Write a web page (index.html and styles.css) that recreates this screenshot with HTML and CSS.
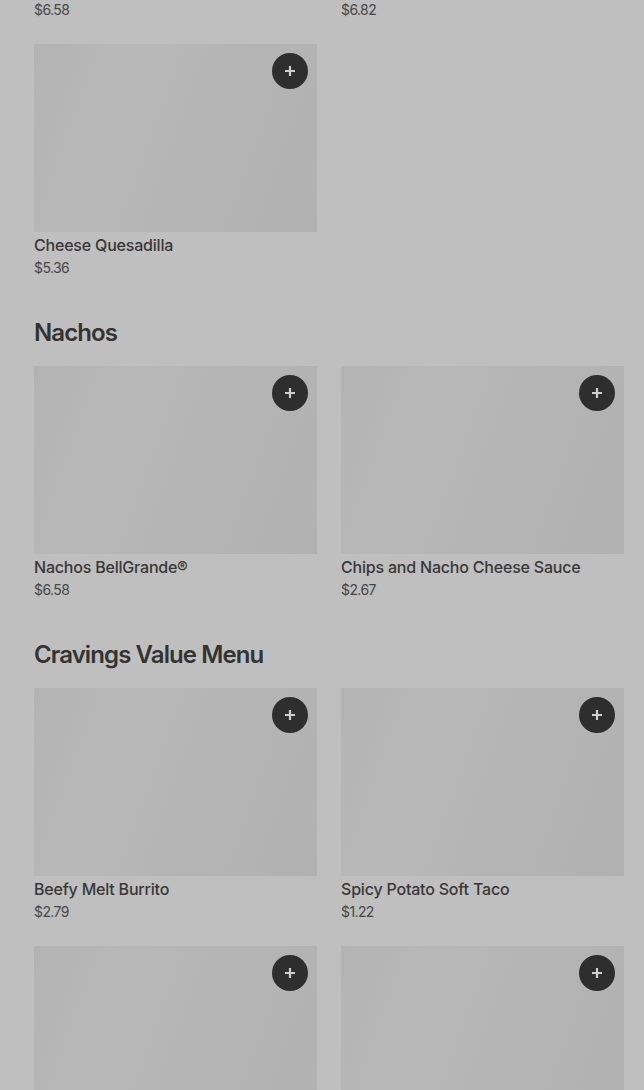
FILE: index.html
```html
<!DOCTYPE html>
<html lang="en">
<head>
    <meta charset="UTF-8">
    <title>Menu</title>
    <link rel="stylesheet" href="styles.css">
</head>
<body>
    <div class="menu">
        <div class="grid tail">
            <div class="price">$6.58</div>
            <div class="price">$6.82</div>
        </div>
        <div class="grid">
            <div class="item">
                <div class="thumb"><button class="add"><svg viewBox="0 0 16 16"><path d="M8 3v10M3 8h10"/></svg></button></div>
                <div class="name">Cheese Quesadilla</div>
                <div class="price">$5.36</div>
            </div>
        </div>

        <section class="section">
            <h2>Nachos</h2>
            <div class="grid">
                <div class="item">
                    <div class="thumb"><button class="add"><svg viewBox="0 0 16 16"><path d="M8 3v10M3 8h10"/></svg></button></div>
                    <div class="name">Nachos BellGrande®</div>
                    <div class="price">$6.58</div>
                </div>
                <div class="item">
                    <div class="thumb"><button class="add"><svg viewBox="0 0 16 16"><path d="M8 3v10M3 8h10"/></svg></button></div>
                    <div class="name">Chips and Nacho Cheese Sauce</div>
                    <div class="price">$2.67</div>
                </div>
            </div>
        </section>

        <section class="section">
            <h2>Cravings Value Menu</h2>
            <div class="grid">
                <div class="item">
                    <div class="thumb"><button class="add"><svg viewBox="0 0 16 16"><path d="M8 3v10M3 8h10"/></svg></button></div>
                    <div class="name">Beefy Melt Burrito</div>
                    <div class="price">$2.79</div>
                </div>
                <div class="item">
                    <div class="thumb"><button class="add"><svg viewBox="0 0 16 16"><path d="M8 3v10M3 8h10"/></svg></button></div>
                    <div class="name">Spicy Potato Soft Taco</div>
                    <div class="price">$1.22</div>
                </div>
                <div class="item">
                    <div class="thumb"><button class="add"><svg viewBox="0 0 16 16"><path d="M8 3v10M3 8h10"/></svg></button></div>
                    <div class="name">&nbsp;</div>
                    <div class="price">&nbsp;</div>
                </div>
                <div class="item">
                    <div class="thumb"><button class="add"><svg viewBox="0 0 16 16"><path d="M8 3v10M3 8h10"/></svg></button></div>
                    <div class="name">&nbsp;</div>
                    <div class="price">&nbsp;</div>
                </div>
            </div>
        </section>
    </div>
</body>
</html>
```

FILE: styles.css
```css
body {
    font-family: Inter, "Noto Sans", sans-serif;
    background-color: #bfbfbf;
    color: #383838;
    margin: 0;
    height: 1090px;
    overflow: hidden;
}
.menu {
    padding: 0 20px 0 34px;
}
.grid {
    display: grid;
    grid-template-columns: repeat(2, 1fr);
    column-gap: 24px;
    row-gap: 24px;
}
.tail {
    margin-top: -1px;
    margin-bottom: 23px;
}
.section {
    margin-top: 39px;
}
h2 {
    font-size: 24px;
    line-height: 32px;
    font-weight: 600;
    letter-spacing: -0.9px;
    margin: 0 0 17px;
    color: #333;
}
.thumb {
    position: relative;
    height: 188px;
    background: linear-gradient(110deg, #b3b3b3 0%, #b8b8b8 28%, #b5b5b5 55%, #b1b1b1 100%);
}
.add {
    position: absolute;
    top: 9px;
    right: 9px;
    width: 36px;
    height: 36px;
    border: none;
    border-radius: 50%;
    background-color: #2e2e2e;
    display: flex;
    align-items: center;
    justify-content: center;
    padding: 0;
}
.add svg {
    width: 16px;
    height: 16px;
    fill: none;
    stroke: #cfcfcf;
    stroke-width: 2.2;
}
.name {
    margin-top: 2px;
    font-size: 16px;
    line-height: 22px;
    font-weight: 500;
    letter-spacing: -0.2px;
}
.price {
    font-size: 14px;
    line-height: 21px;
    padding-top: 1px;
    color: #474747;
    letter-spacing: -0.6px;
}
.tail .price {
    padding-top: 0;
    line-height: 22px;
}
```
